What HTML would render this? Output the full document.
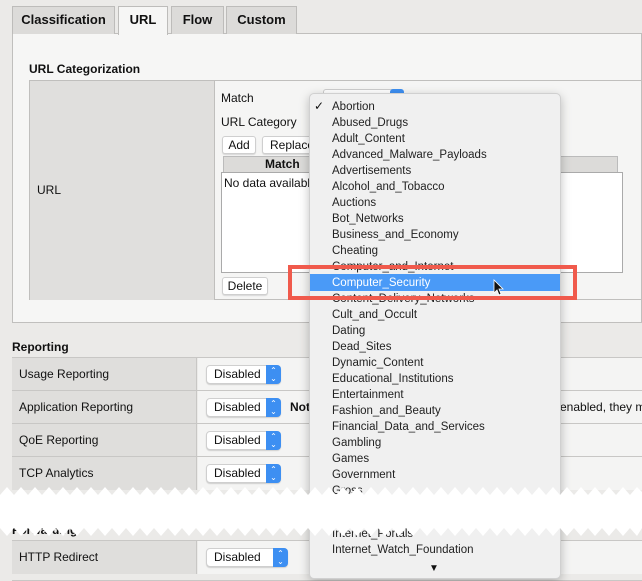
<!DOCTYPE html>
<html><head><meta charset="utf-8"><style>
*{box-sizing:border-box;margin:0;padding:0}
body{width:642px;height:580px;overflow:hidden;background:#ebeae8;font-family:"Liberation Sans",Arial,sans-serif;font-size:12px;color:#111;position:relative}
.a{position:absolute;white-space:nowrap}
.tab{position:absolute;top:6px;height:28px;background:#dcdbd9;border:1px solid #bdbcba;border-bottom:none;font-weight:bold;font-size:13px;text-align:center;line-height:26px}
.btn{position:absolute;background:#fff;border:1px solid #cfcfcf;border-radius:3px;height:18px;line-height:16px;text-align:center;font-size:12px;box-shadow:0 1px 1px rgba(0,0,0,.12)}
.sel{position:absolute;height:19px;background:#fff;border:1px solid #cfcfcf;border-radius:4px;box-shadow:0 1px 1px rgba(0,0,0,.15);font-size:12px;line-height:17px;padding-left:7px}
.sel i{position:absolute;right:-1px;top:-1px;width:15px;height:19px;background:#3d8ff2;border-radius:0 4px 4px 0;color:#fff;font-style:normal;font-size:8px;line-height:8px;text-align:center;padding-top:2px}
.row{position:absolute;left:12px;width:630px;height:33px;border-top:1px solid #c8c7c5}
.row .l{position:absolute;left:0;top:0;width:185px;height:33px;background:#dfdedc;border-right:1px solid #c8c7c5;padding-left:7px;line-height:32px;font-size:12px}
.row .r{position:absolute;left:186px;top:0;right:0;height:33px;background:#f4f4f3}
.menu{position:absolute;left:309px;top:93px;width:252px;height:486px;background:#f0f0f0;border:1px solid #d0d0d0;border-radius:5px;box-shadow:0 3px 10px rgba(0,0,0,.25)}
.it{position:absolute;left:22px;font-size:11.5px;color:#222;line-height:16px;white-space:nowrap}
</style></head><body>
<div class="a" style="left:12px;top:33px;width:630px;height:290px;background:#f6f6f5;border:1px solid #c0bfbd"></div>
<div class="tab" style="left:12px;width:103px">Classification</div>
<div class="tab" style="left:118px;width:50px;background:#f6f6f5;height:29px">URL</div>
<div class="tab" style="left:171px;width:53px">Flow</div>
<div class="tab" style="left:226px;width:71px">Custom</div>
<div class="a" style="left:29px;top:62px;font-weight:bold;font-size:12px">URL Categorization</div>
<div class="a" style="left:29px;top:80px;width:613px;height:220px;border:1px solid #c0bfbd;background:#f5f5f4"></div>
<div class="a" style="left:30px;top:81px;width:185px;height:219px;background:#e0dfdd;border-right:1px solid #c0bfbd"></div>
<div class="a" style="left:37px;top:183px">URL</div>
<div class="a" style="left:221px;top:91px">Match</div>
<div class="a" style="left:221px;top:115px">URL Category</div>
<div class="a" style="left:323px;top:89px;width:80px;height:10px;background:#fff;border:1px solid #ccc;border-radius:3px"></div>
<div class="a" style="left:390px;top:89px;width:14px;height:10px;background:#3d8ff2;border-radius:3px"></div>
<div class="a" style="left:558px;top:110px;width:3px;height:18px;background:#3d8ff2"></div>
<div class="btn" style="left:222px;top:136px;width:34px">Add</div>
<div class="btn" style="left:262px;top:136px;width:60px">Replace</div>
<div class="a" style="left:223px;top:156px;width:395px;height:17px;background:#dcdbd9;border:1px solid #bbb;font-weight:bold;line-height:15px;padding-left:41px">Match</div>
<div class="a" style="left:221px;top:172px;width:402px;height:101px;background:#fff;border:1px solid #aaa;padding:3px 2px">No data availabl</div>
<div class="btn" style="left:222px;top:277px;width:46px">Delete</div>

<div class="a" style="left:12px;top:340px;font-weight:bold">Reporting</div>
<div class="row" style="top:357px"><div class="l">Usage Reporting</div><div class="r"><div class="sel" style="left:8px;top:7px;width:75px">Disabled<i>⌃<br>⌄</i></div></div></div>
<div class="row" style="top:390px"><div class="l">Application Reporting</div><div class="r"><div class="sel" style="left:8px;top:7px;width:75px">Disabled<i>⌃<br>⌄</i></div><div class="a" style="left:92px;top:9px;font-weight:bold">Not</div><div class="a" style="left:362px;top:9px">enabled, they m</div></div></div>
<div class="row" style="top:423px"><div class="l">QoE Reporting</div><div class="r"><div class="sel" style="left:8px;top:7px;width:75px">Disabled<i>⌃<br>⌄</i></div></div></div>
<div class="row" style="top:456px"><div class="l">TCP Analytics</div><div class="r"><div class="sel" style="left:8px;top:7px;width:75px">Disabled<i>⌃<br>⌄</i></div></div></div>
<div class="a" style="left:12px;top:523px;font-weight:bold">Forwarding</div>
<div class="row" style="top:540px;border-bottom:1px solid #c8c7c5;height:41px"><div class="l">HTTP Redirect</div><div class="r"><div class="sel" style="left:8px;top:7px;width:82px">Disabled<i>⌃<br>⌄</i></div></div></div>

<div class="menu">
<div class="a" style="left:4px;top:5px;font-size:12px">✓</div>
<div class="it" style="top:5px">Abortion</div>
<div class="it" style="top:21px">Abused_Drugs</div>
<div class="it" style="top:37px">Adult_Content</div>
<div class="it" style="top:53px">Advanced_Malware_Payloads</div>
<div class="it" style="top:69px">Advertisements</div>
<div class="it" style="top:85px">Alcohol_and_Tobacco</div>
<div class="it" style="top:101px">Auctions</div>
<div class="it" style="top:117px">Bot_Networks</div>
<div class="it" style="top:133px">Business_and_Economy</div>
<div class="it" style="top:149px">Cheating</div>
<div class="it" style="top:165px">Computer_and_Internet</div>
<div class="a" style="left:0;top:180px;width:250px;height:17px;background:#4a9af7"></div>
<div class="it" style="top:181px;color:#fff">Computer_Security</div>
<div class="it" style="top:197px">Content_Delivery_Networks</div>
<div class="it" style="top:213px">Cult_and_Occult</div>
<div class="it" style="top:229px">Dating</div>
<div class="it" style="top:245px">Dead_Sites</div>
<div class="it" style="top:261px">Dynamic_Content</div>
<div class="it" style="top:277px">Educational_Institutions</div>
<div class="it" style="top:293px">Entertainment</div>
<div class="it" style="top:309px">Fashion_and_Beauty</div>
<div class="it" style="top:325px">Financial_Data_and_Services</div>
<div class="it" style="top:341px">Gambling</div>
<div class="it" style="top:357px">Games</div>
<div class="it" style="top:373px">Government</div>
<div class="it" style="top:389px">Gross</div>
<div class="it" style="top:432px">Internet_Portals</div>
<div class="it" style="top:448px">Internet_Watch_Foundation</div>
<div class="a" style="left:119px;top:469px;font-size:10px">▼</div>
</div>
<svg class="a" style="left:0;top:0" width="642" height="580">
<rect x="290" y="267" width="285" height="31" fill="none" stroke="#f05a4c" stroke-width="4"/>
<path d="M494 280 L494 293 L497 290 L499 295 L501 294 L499 289 L503 289 Z" fill="#111" stroke="#fff" stroke-width="0.8"/>
<path d="M0 495 L7 487 L14 495 L21 487 L28 495 L35 487 L42 495 L49 487 L56 495 L63 487 L70 495 L77 487 L84 495 L91 487 L98 495 L105 487 L112 495 L119 487 L126 495 L133 487 L140 495 L147 487 L154 495 L161 487 L168 495 L175 487 L182 495 L189 487 L196 495 L203 487 L210 495 L217 487 L224 495 L231 487 L238 495 L245 487 L252 495 L259 487 L266 495 L273 487 L280 495 L287 487 L294 495 L301 487 L308 495 L315 487 L322 495 L329 487 L336 495 L343 487 L350 495 L357 487 L364 495 L371 487 L378 495 L385 487 L392 495 L399 487 L406 495 L413 487 L420 495 L427 487 L434 495 L441 487 L448 495 L455 487 L462 495 L469 487 L476 495 L483 487 L490 495 L497 487 L504 495 L511 487 L518 495 L525 487 L532 495 L539 487 L546 495 L553 487 L560 495 L567 487 L574 495 L581 487 L588 495 L595 487 L602 495 L609 487 L616 495 L623 487 L630 495 L637 487 L642 492 L642 528 L637 536 L630 528 L623 536 L616 528 L609 536 L602 528 L595 536 L588 528 L581 536 L574 528 L567 536 L560 528 L553 536 L546 528 L539 536 L532 528 L525 536 L518 528 L511 536 L504 528 L497 536 L490 528 L483 536 L476 528 L469 536 L462 528 L455 536 L448 528 L441 536 L434 528 L427 536 L420 528 L413 536 L406 528 L399 536 L392 528 L385 536 L378 528 L371 536 L364 528 L357 536 L350 528 L343 536 L336 528 L329 536 L322 528 L315 536 L308 528 L301 536 L294 528 L287 536 L280 528 L273 536 L266 528 L259 536 L252 528 L245 536 L238 528 L231 536 L224 528 L217 536 L210 528 L203 536 L196 528 L189 536 L182 528 L175 536 L168 528 L161 536 L154 528 L147 536 L140 528 L133 536 L126 528 L119 536 L112 528 L105 536 L98 528 L91 536 L84 528 L77 536 L70 528 L63 536 L56 528 L49 536 L42 528 L35 536 L28 528 L21 536 L14 528 L7 536 L0 528 Z" fill="#fff"/>
</svg>
</body></html>
